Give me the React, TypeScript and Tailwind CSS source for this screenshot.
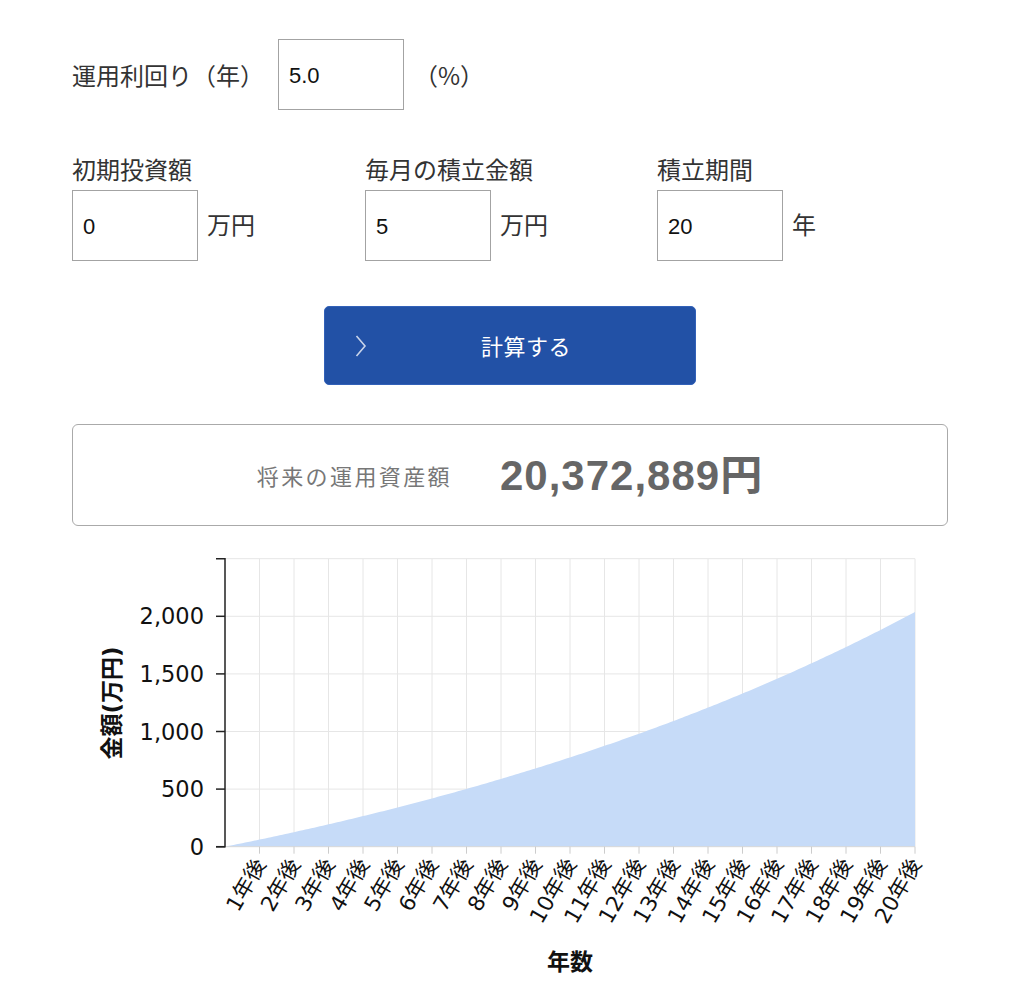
import React from "react";

const X0 = 225;
const STEP = 34.5;
const Y0 = 846.7;
const YTOP = 558.7;
const YMAX = 2500;
const yOf = (v: number) => Y0 - (v / YMAX) * (Y0 - YTOP);

function buildArea() {
  const m = Math.pow(1.05, 1 / 12) - 1;
  const pts: string[] = [];
  for (let t = 0; t <= 240; t++) {
    const v = t === 0 ? 0 : (5 * (1 + m) * (Math.pow(1 + m, t) - 1)) / m;
    const x = X0 + (t / 12) * STEP;
    pts.push(`${x.toFixed(2)},${yOf(v).toFixed(2)}`);
  }
  return `M${X0},${Y0} L${pts.join(" L")} L${X0 + 20 * STEP},${Y0} Z`;
}

const jp = { fontFamily: '"Noto Sans CJK JP", sans-serif' };
const num = { fontFamily: '"Liberation Sans", "Noto Sans CJK JP", sans-serif' };
const chartFont = '"DejaVu Sans", "Noto Sans CJK JP", sans-serif';

function Field({ value }: { value: string }) {
  return (
    <div
      className="w-[126px] h-[71px] border border-[#a3a3a3] bg-white flex items-center px-[10px] pt-[2px] text-[22px] text-[#111]"
      style={num}
    >
      {value}
    </div>
  );
}

function Column({ label, value, unit }: { label: string; value: string; unit: string }) {
  return (
    <div>
      <div className="text-[24px] leading-[24px] text-[#333] -mt-[1px]" style={jp}>
        {label}
      </div>
      <div className="mt-[9px] flex items-center">
        <Field value={value} />
        <span className="ml-[9px] text-[24px] text-[#333] -mt-[3px]" style={jp}>
          {unit}
        </span>
      </div>
    </div>
  );
}

export default function App() {
  const area = buildArea();
  const xs = Array.from({ length: 20 }, (_, i) => X0 + STEP * (i + 1));
  const yTicks = [0, 500, 1000, 1500, 2000];
  return (
    <div className="w-[1024px] h-[994px] bg-white overflow-hidden">
      <div className="ml-[72px] w-[876px] pt-[39px]">
        <div className="flex items-center">
          <div className="w-[206px] text-[24px] text-[#333]" style={jp}>
            運用利回り（年）
          </div>
          <Field value="5.0" />
          <span className="ml-[10px] text-[24px] text-[#333]" style={jp}>
            （%）
          </span>
        </div>

        <div className="mt-[48px] grid grid-cols-[293px_292px_291px]">
          <Column label="初期投資額" value="0" unit="万円" />
          <Column label="毎月の積立金額" value="5" unit="万円" />
          <Column label="積立期間" value="20" unit="年" />
        </div>

        <div className="mt-[45px] flex">
          <button className="ml-[252px] w-[372px] h-[79px] rounded-[5px] bg-[#2251a6] border border-[#3261b8] flex items-center text-white">
            <svg width="12" height="24" viewBox="0 0 12 24" className="ml-[30px]">
              <path d="M1.5 2 L10 12 L1.5 22" fill="none" stroke="#c9d4ea" strokeWidth="1.6" />
            </svg>
            <span className="ml-[114px] text-[22px] tracking-[0.5px]" style={jp}>
              計算する
            </span>
          </button>
        </div>

        <div className="mt-[39px] h-[102px] rounded-[6px] border border-[#aaaaaa] flex items-center justify-center gap-[48px]">
          <span className="text-[22px] tracking-[2.4px] text-[#777]" style={jp}>
            将来の運用資産額
          </span>
          <span className="text-[42px] font-bold tracking-[1px] text-[#666]" style={num}>
            20,372,889円
          </span>
        </div>

        <svg width="876" height="468" viewBox="72 526 876 468" className="block">
          {xs.map((x, i) => (
            <line key={"gv" + i} x1={x} y1={YTOP} x2={x} y2={Y0} stroke="#e6e6e6" strokeWidth="1" />
          ))}
          {[500, 1000, 1500, 2000, 2500].map((v) => (
            <line key={"gh" + v} x1={X0} y1={yOf(v)} x2={X0 + 20 * STEP} y2={yOf(v)} stroke="#e6e6e6" strokeWidth="1" />
          ))}
          <path d={area} fill="#c6dbf8" />
          <line x1={X0} y1={Y0} x2={X0 + 20 * STEP} y2={Y0} stroke="#d8d8d8" strokeWidth="1" />
          {xs.map((x, i) => (
            <line key={"xt" + i} x1={x} y1={Y0} x2={x} y2={Y0 + 7} stroke="#cccccc" strokeWidth="1" />
          ))}
          <path d={`M216,${YTOP} H${X0} V${Y0} H216`} fill="none" stroke="#222" strokeWidth="1.5" />
          {yTicks.map((v) => (
            <g key={"yt" + v}>
              <line x1={216} y1={yOf(v)} x2={X0} y2={yOf(v)} stroke="#222" strokeWidth="1.5" />
              <text
                x={204}
                y={yOf(v)}
                textAnchor="end"
                dominantBaseline="central"
                fontSize="22.5"
                fill="#111"
                fontFamily={chartFont}
              >
                {v.toLocaleString("en-US")}
              </text>
            </g>
          ))}
          {xs.map((x, i) => (
            <text
              key={"xl" + i}
              transform={`translate(${x + 7},${864}) rotate(-60)`}
              textAnchor="end"
              fontSize="21.5"
              fill="#111"
              fontFamily={chartFont}
            >
              {`${i + 1}年後`}
            </text>
          ))}
          <text
            transform="translate(112,703) rotate(-90)"
            textAnchor="middle"
            dominantBaseline="central"
            fontSize="23"
            fontWeight="bold"
            fill="#111"
            fontFamily={chartFont}
          >
            金額(万円)
          </text>
          <text
            x={570}
            y={962}
            textAnchor="middle"
            dominantBaseline="central"
            fontSize="23"
            fontWeight="bold"
            fill="#111"
            fontFamily={chartFont}
          >
            年数
          </text>
        </svg>
      </div>
    </div>
  );
}
